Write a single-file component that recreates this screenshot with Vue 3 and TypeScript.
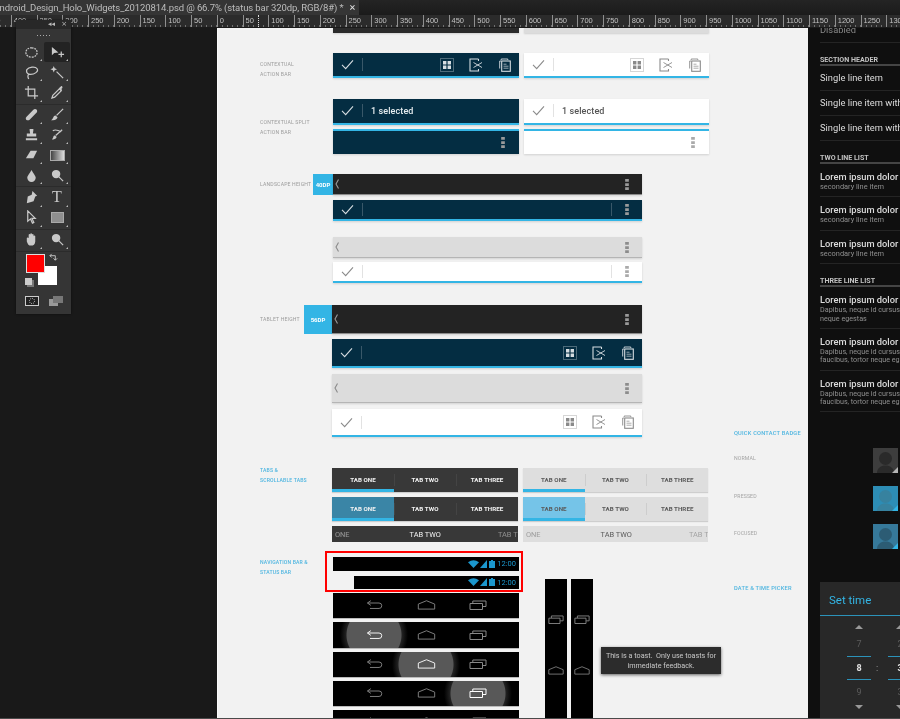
<template>
  <svg class="sprite">
    <symbol id="check" viewBox="0 0 14 12"><path d="M1 6.5 5 10.5 13 1.5" fill="none" stroke="currentColor" stroke-width="1.2" /></symbol>
    <symbol id="grid" viewBox="0 0 14 14">
      <rect x=".5" y=".5" width="13" height="13" fill="none" stroke="currentColor" stroke-width=".7" stroke-dasharray="1 1" />
      <path d="M3 3h3.4v3.4H3zM7.6 3H11v3.4H7.6zM3 7.6h3.4V11H3zM7.6 7.6H11V11H7.6z" fill="currentColor" />
    </symbol>
    <symbol id="cut" viewBox="0 0 14 14">
      <path d="M9.5 1H1v12h8.5V11M9.5 1v2" fill="none" stroke="currentColor" stroke-width="1.1" />
      <path d="M4.5 4.5 13 9.5M4.5 9.5 13 4.5" fill="none" stroke="currentColor" stroke-width=".9" />
    </symbol>
    <symbol id="copy" viewBox="0 0 12 14">
      <path d="M.7 10.5V3h1.3M2.2 2V1h6.6v1" fill="none" stroke="currentColor" stroke-width=".9" />
      <rect x="2.7" y="3" width="8.6" height="10.3" fill="none" stroke="currentColor" stroke-width="1.1" />
      <path d="M4.5 6.2h3M4.5 8.2h5M4.5 10.2h5" stroke="currentColor" stroke-width=".7" />
    </symbol>
    <symbol id="more" viewBox="0 0 4 12"><path d="M0 0h4v3H0zM0 4.5h4v3H0zM0 9h4v3H0z" fill="currentColor" /></symbol>
    <symbol id="caret" viewBox="0 0 4 10"><path d="M3.5 .5 1 5l2.5 4.500" fill="none" stroke="currentColor" stroke-width="1.1" /></symbol>
    <symbol id="back" viewBox="0 0 18 11">
      <path d="M5 .7 1.200 3.300 5 5.900M1.500 3.300H14q3 0 3 3t-3 3H4" fill="none" stroke="currentColor" stroke-width="1" />
    </symbol>
    <symbol id="home" viewBox="0 0 20 11"><path d="M1 10V4.500L10 .8l9 3.700V10z" fill="none" stroke="currentColor" stroke-width="1" /></symbol>
    <symbol id="recent" viewBox="0 0 18 10">
      <path d="M1 3.500h12.500v6H1zM3.800 3.300V1H17v5.500h-3.300" fill="none" stroke="currentColor" stroke-width="1" />
    </symbol>
    <symbol id="wifi" viewBox="0 0 11 8"><path d="M5.500 8 0 2.200Q5.500-1.800 11 2.200z" fill="currentColor" /></symbol>
    <symbol id="signal" viewBox="0 0 7 8"><path d="M7 0v8H0z" fill="currentColor" /></symbol>
    <symbol id="battery" viewBox="0 0 6 8"><path d="M2 0h2v1h2v7H0V1h2z" fill="currentColor" /></symbol>
    <symbol id="person" viewBox="0 0 25 25">
      <circle cx="12.500" cy="10.500" r="6.500" fill="currentColor" />
      <path d="M4 25c0-5 4-7.500 8.500-7.500S21 20 21 25z" fill="currentColor" />
    </symbol>
  </svg>

  <div class="ps">
    <div class="tabbar">
      <div class="tab">
        <span class="tab-name">Android_Design_Holo_Widgets_20120814.psd @ 66.7% (status bar 320dp, RGB/8#) *</span>
        <span class="tab-x">×</span>
      </div>
    </div>
    <div class="ruler">
      <span v-for="n in rulerMarks" :key="n" class="mark">{{ Math.abs(n) }}</span>
      <i class="cursor"></i>
    </div>

    <div class="work">
      <div class="paste"></div>

      <div class="doc">
        <div class="main">
          <div class="sec s0">
            <div class="lab"></div>
            <div class="pair">
              <div class="bar navy cut-top"></div>
              <div class="bar grey cut-top"></div>
            </div>
          </div>

          <div class="sec s1">
            <div class="lab"><span class="note p7">CONTEXTUAL<br />ACTION BAR</span></div>
            <div class="pair">
              <div v-for="c in ['navy', 'white']" :key="c" class="bar h25 uline" :class="c">
                <svg class="chk"><use href="#check" /></svg><i class="dv"></i>
                <span class="fill"></span>
                <svg class="act"><use href="#grid" /></svg>
                <svg class="act"><use href="#cut" /></svg>
                <svg class="act"><use href="#copy" /></svg>
              </div>
            </div>
          </div>

          <div class="sec s2">
            <div class="lab"><span class="note p19">CONTEXTUAL SPLIT<br />ACTION BAR</span></div>
            <div class="pair">
              <div v-for="c in ['navy', 'white']" :key="c" class="split">
                <div class="bar h26 uline pb1" :class="c">
                  <svg class="chk"><use href="#check" /></svg><i class="dv"></i>
                  <span class="sel">1 selected</span>
                </div>
                <div class="bar h25 oline" :class="c">
                  <span class="fill"></span>
                  <svg class="more m1"><use href="#more" /></svg>
                </div>
              </div>
            </div>
          </div>

          <div class="sec s3">
            <div class="lab">
              <span class="note p6">LANDSCAPE HEIGHT</span>
              <b class="tag t40">40DP</b>
            </div>
            <div class="stack w309">
              <div class="bar h21 char">
                <svg class="caret"><use href="#caret" /></svg><span class="fill"></span>
                <svg class="more"><use href="#more" /></svg>
              </div>
              <div class="bar h21 navy uline g5">
                <svg class="chk"><use href="#check" /></svg><i class="dv"></i><span class="fill"></span>
                <i class="dv"></i><svg class="more"><use href="#more" /></svg>
              </div>
              <div class="bar h21 grey g16">
                <svg class="caret"><use href="#caret" /></svg><span class="fill"></span>
                <svg class="more"><use href="#more" /></svg>
              </div>
              <div class="bar h21 white uline g4">
                <svg class="chk"><use href="#check" /></svg><i class="dv"></i><span class="fill"></span>
                <i class="dv"></i><svg class="more"><use href="#more" /></svg>
              </div>
            </div>
          </div>

          <div class="sec s4">
            <div class="lab">
              <span class="note p10">TABLET HEIGHT</span>
              <b class="tag t56">56DP</b>
            </div>
            <div class="stack w310">
              <div class="bar h29 char">
                <svg class="caret"><use href="#caret" /></svg><span class="fill"></span>
                <svg class="more"><use href="#more" /></svg>
              </div>
              <div class="bar h29 navy uline g5">
                <svg class="chk"><use href="#check" /></svg><i class="dv"></i><span class="fill"></span>
                <svg class="act"><use href="#grid" /></svg>
                <svg class="act"><use href="#cut" /></svg>
                <svg class="act"><use href="#copy" /></svg>
              </div>
              <div class="bar h29 grey g6">
                <svg class="caret"><use href="#caret" /></svg><span class="fill"></span>
                <svg class="more"><use href="#more" /></svg>
              </div>
              <div class="bar h28 white uline g6">
                <svg class="chk"><use href="#check" /></svg><i class="dv"></i><span class="fill"></span>
                <svg class="act"><use href="#grid" /></svg>
                <svg class="act"><use href="#cut" /></svg>
                <svg class="act"><use href="#copy" /></svg>
              </div>
            </div>
          </div>

          <div class="sec s5">
            <div class="lab"><span class="note blue up3">TABS &amp;<br />SCROLLABLE TABS</span></div>
            <div class="tabs-grid">
              <template v-for="c in ['dk', 'lt']" :key="c">
                <div class="tabs" :class="c">
                  <span class="on">TAB ONE</span><span>TAB TWO</span><span>TAB THREE</span>
                </div>
              </template>
              <template v-for="c in ['dk', 'lt']" :key="c">
                <div class="tabs press" :class="c">
                  <span class="on">TAB ONE</span><span>TAB TWO</span><span>TAB THREE</span>
                </div>
              </template>
              <template v-for="c in ['dk', 'lt']" :key="c">
                <div class="scroll" :class="c">
                  <span class="first">ONE</span><span class="mid">TAB TWO</span><span class="last">TAB THREE</span>
                </div>
              </template>
            </div>
          </div>

          <div class="sec s6">
            <div class="lab"><span class="note blue p1">NAVIGATION BAR &amp;<br />STATUS BAR</span></div>
            <div class="navs">
              <div class="red"></div>
              <div v-for="(w, i) in [186, 165]" :key="i" class="status" :style="{ width: w + 'px' }">
                <svg class="wifi"><use href="#wifi" /></svg>
                <svg class="sig"><use href="#signal" /></svg>
                <svg class="bat"><use href="#battery" /></svg>
                <span>12:00</span>
              </div>
              <div v-for="(n, i) in navRows" :key="i" class="nav" :class="n">
                <svg class="nb"><use href="#back" /></svg>
                <svg class="nh"><use href="#home" /></svg>
                <svg class="nr"><use href="#recent" /></svg>
              </div>
            </div>
            <div class="vnavs">
              <div v-for="i in 2" :key="i" class="vnav">
                <svg class="vi"><use href="#recent" /></svg>
                <svg class="vi"><use href="#home" /></svg>
              </div>
              <div class="toast">This is a toast.&nbsp; Only use toasts for immediate feedback.</div>
            </div>
          </div>
        </div>

        <div class="notes">
          <div class="nh1">QUICK CONTACT BADGE</div>
          <div class="nn">NORMAL</div>
          <div class="nn">PRESSED</div>
          <div class="nn">FOCUSED</div>
          <div class="nh2">DATE &amp; TIME PICKER</div>
        </div>
      </div>

      <div class="side">
        <div class="li single clip">Disabled</div>
        <div class="hd">SECTION HEADER</div>
        <div class="li single">Single line item</div>
        <div class="li single">Single line item with</div>
        <div class="li single">Single line item with</div>
        <div class="hd">TWO LINE LIST</div>
        <div v-for="i in 3" :key="i" class="li two">
          <div class="pri">Lorem ipsum dolor</div>
          <div class="sub">secondary line item</div>
        </div>
        <div class="hd">THREE LINE LIST</div>
        <div v-for="(t, i) in threeLines" :key="i" class="li three">
          <div class="pri">Lorem ipsum dolor</div>
          <div class="sub">Dapibus, neque id cursus</div>
          <div class="sub">{{ t }}</div>
        </div>
        <div class="badges">
          <div v-for="b in ['b-n', 'b-p', 'b-f']" :key="b" class="badge" :class="b">
            <svg><use href="#person" /></svg>
          </div>
        </div>
        <div class="dialog">
          <div class="dlg-title">Set time</div>
          <div class="picker">
            <div v-for="(col, i) in pickerCols" :key="i" class="pcol" :class="{ second: i === 1 }">
              <i class="up"></i>
              <span class="dim">{{ col[0] }}</span>
              <b class="cur">{{ col[1] }}</b>
              <span class="dim">{{ col[2] }}</span>
              <i class="down"></i>
            </div>
            <span class="colon">:</span>
          </div>
        </div>
      </div>
    </div>

    <div class="tools">
      <div class="tools-head"><span>◂◂</span><span>×</span></div>
      <div class="grip"></div>
      <div v-for="(group, g) in toolGroups" :key="g" class="tgroup">
        <div v-for="(t, i) in group" :key="i" class="tool" :class="{ picked: t.picked }">
          <svg v-if="t.s || t.f" viewBox="0 0 16 16">
            <path v-if="t.f" :d="t.f" class="tf" />
            <path v-if="t.s" :d="t.s" class="ts" :class="{ dash: t.dash }" />
          </svg>
          <span v-else-if="t.text" class="tool-t">{{ t.text }}</span>
          <span v-else :class="t.box"></span>
        </div>
      </div>
      <div class="swatches">
        <i class="bgc"></i>
        <i class="fgc"></i>
        <i class="dflt"></i>
        <svg class="swap" viewBox="0 0 10 10"><path d="M1 3h6v5M1 3l2-2M1 3l2 2M7 8 5 6M7 8l2-2" fill="none" stroke="#ccc" stroke-width="1" /></svg>
      </div>
      <div class="modes">
        <svg viewBox="0 0 14 10"><rect x=".5" y=".5" width="13" height="9" fill="#222" stroke="#ccc" /><circle cx="7" cy="5" r="2.600" fill="none" stroke="#ccc" stroke-dasharray="1 1" /></svg>
        <svg viewBox="0 0 14 10"><rect x="0" y="3" width="9" height="7" fill="#999" /><rect x="4" y="0" width="10" height="7" fill="#777" /></svg>
      </div>
    </div>
    <div class="foot"></div>
  </div>
</template>

<script setup lang="ts">
type Tool = { s?: string; f?: string; dash?: boolean; picked?: boolean; text?: string; box?: string }

// ruler runs every 50 units, 25.75px apart
const rulerMarks: number[] = []
for (let n = -450; n <= 1350; n += 50) rulerMarks.push(n)

const navRows = ['', 'p1', 'p2', 'p3', '']
const threeLines = ['neque egestas', 'faucibus, tortor neque eg', 'faucibus, tortor neque eg']
const pickerCols = [['7', '8', '9'], ['2', '3', '3']]

const toolGroups: Tool[][] = [
  [
    { s: 'M8 3c3.600 0 6 2.200 6 5s-2.400 5-6 5-6-2.200-6-5 2.400-5 6-5z', dash: true },
    { f: 'M2 2v9l2.500-2.500L9 8z', s: 'M12 7v6M9 10h6', picked: true },
    { s: 'M3 5c2-3 9-4 11-1s-3 6-7 6c-3 0-5-2-4-5zM5 10c-1 1-1 3 0 5' },
    { f: 'M4 1l1 2.500 2.500 1-2.500 1-1 2.500-1-2.500L.5 4.500 3 3.500z', s: 'M7 7l7 7' },
    { s: 'M4.500 1v10.500H15M1 4.500h10.500V15' },
    { f: 'M9.500 3.500l2-2c1-1 2.500.5 1.500 2l-1 .7 1 1-1 1-3-3z', s: 'M2 14l1-3 7-7 2 2-7 7z' }
  ],
  [
    { f: 'M3 10l7-7c1.500-1.500 4-.5 4 1 0 1 0 1.500-1 2.500l-7 7c-1.500 1.500-4 .5-4-1-.3-1 0-1.500 1-2.500z' },
    { f: 'M6 9c-3 0-2 4-5 5 4 1 7-1 7-3z', s: 'M14 2 7 9' },
    { f: 'M6 2h4v1.500L9.500 7H13v3H3V7h3.500L6 3.500zM2 12h12v2H2z' },
    { f: 'M5 9c-2 0-1 3-3 4 3 1 5-1 5-2.500z', s: 'M13 3 6 9M3 4c3-2 7 0 9 1' },
    { f: 'M7 3h7l-4 8H2z' },
    { box: 'grad' },
    { f: 'M8 2c2 4 4.500 6 4.500 8.500a4.500 4.500 0 01-9 0C3.500 8 6 6 8 2z' },
    { f: 'M6.500 2a4.500 4.500 0 110 9 4.500 4.500 0 010-9z', s: 'M9 9l5 5' }
  ],
  [
    { f: 'M9 1l5 5-2 .8-1.800 5.200L3 14l1-7 4.200-2z' },
    { text: 'T' },
    { s: 'M4 1v11l3-2.500 2 4.500 1.500-.7-2-4.300H12z' },
    { box: 'shape' }
  ],
  [
    { f: 'M3 6.500c0-1 1.500-1 2 0V3c0-1 1.700-1 1.700 0V2c0-1 1.800-1 1.800 0v1c0-1 1.700-1 1.700 0v1.500c0-1 1.800-1 1.800 0V10c0 3-2 4.500-4.500 4.500S4 13 3 10z' },
    { f: 'M6.500 2a4.500 4.500 0 110 9 4.500 4.500 0 010-9z', s: 'M9 9l5 5' }
  ]
]
</script>

<style>
html, body {
  margin: 0;
  height: 719px;
  overflow: hidden;
  background: #191919;
}
</style>

<style scoped>
.sprite { display: none; }
.ps {
  position: relative;
  width: 900px;
  height: 719px;
  overflow: hidden;
  font-family: Roboto, "Liberation Sans", sans-serif;
  background: #191919;
  filter: blur(.3px);
}

/* title strip + ruler */
.tabbar {
  height: 15px;
  background: linear-gradient(#242424, #1b1b1b);
  overflow: hidden;
}
.tab {
  width: 359px;
  height: 15px;
  background: #353535;
  display: flex;
  align-items: center;
  white-space: nowrap;
  overflow: hidden;
  font: 9.5px Roboto, sans-serif;
  letter-spacing: -.1px;
  color: #bcbcbc;
}
.tab-name { margin-left: -6.500px; flex: none; }
.tab-x { margin-left: 6px; color: #ddd; font-size: 11px; }
.ruler {
  position: relative;
  height: 13px;
  background: #2b2b2b;
  display: flex;
  overflow: hidden;
  margin-left: -15px;
  border-bottom: 1px solid #1a1a1a;
  box-sizing: border-box;
}
.mark {
  flex: none;
  width: 25.75px;
  box-sizing: border-box;
  border-left: 1px solid #8f8f8f;
  padding-left: 2px;
  font: 7.5px/12px "Liberation Sans", sans-serif;
  color: #c2c2c2;
  background: repeating-linear-gradient(90deg, transparent 0 4px, #6f6f6f 4px 5px) left bottom / 100% 2px no-repeat;
}
.cursor {
  position: absolute;
  left: 273px;
  top: 0;
  bottom: 0;
  border-left: 1px dotted #ddd;
}

/* workspace */
.work { display: flex; height: 691px; }
.paste { width: 217px; flex: none; background: #191919; }
.doc {
  width: 591px;
  flex: none;
  display: flex;
  background: #f2f2f2;
  overflow: hidden;
  border-left: 1px solid #fafafa;
  box-sizing: border-box;
}
.main { width: 516px; flex: none; }
.sec { display: grid; grid-template-columns: 115px 1fr; }
.lab { display: flex; align-items: flex-start; min-width: 0; }
.note {
  display: block;
  padding-left: 42px;
  font-size: 5.1px;
  line-height: 9.5px;
  letter-spacing: .2px;
  color: #9c9c9c;
  white-space: nowrap;
}
.note.blue { color: #4db5e0; font-weight: 500; letter-spacing: .15px; }
.p1 { padding-top: 1px; }
.p6 { padding-top: 6px; }
.p7 { padding-top: 7px; }
.p10 { padding-top: 10px; }
.p19 { padding-top: 19px; }
.up3 { margin-top: -2px; }
.tag {
  margin-left: auto;
  flex: none;
  background: #33b5e5;
  color: #fff;
  font-size: 6px;
  font-weight: 700;
  display: flex;
  align-items: center;
  justify-content: center;
}
.t40 { width: 20px; height: 21px; }
.t56 { width: 28px; height: 29px; margin-right: 1px; }

.s1, .s2, .s3 { margin-top: 20px; }
.s4 { margin-top: 22px; }
.s5 { margin-top: 31px; }
.s6 { margin-top: 15px; grid-template-columns: 115px 186px 1fr; }

.pair { display: grid; grid-template-columns: 186px 185px; gap: 5px; }
.split { display: flex; flex-direction: column; gap: 4px; }
.stack { display: flex; flex-direction: column; }
.w309 { width: 309px; }
.w310 { width: 310px; margin-left: -1px; }
.g4 { margin-top: 4px; }
.g5 { margin-top: 5px; }
.g6 { margin-top: 6px; }
.g16 { margin-top: 16px; }

.bar {
  display: flex;
  align-items: center;
  box-sizing: border-box;
  box-shadow: 0 1px 2px rgba(0, 0, 0, .14);
}
.cut-top { height: 5px; }
.h21 { height: 21px; }
.h25 { height: 25px; }
.h26 { height: 26px; }
.h28 { height: 28px; }
.h29 { height: 29px; }
.pb1 { padding-bottom: 1px; }
.navy { background: #042d42; color: #d6dde1; }
.white { background: #fff; color: #8a8a8a; }
.char { background: #232323; color: #9a9a9a; border-bottom: 1px solid #8c8c8c; }
.grey { background: #dcdcdc; color: #8a8a8a; border-bottom: 1px solid #b5b5b5; }
.cut-top.navy { background: #2b2b2b; }
.cut-top.grey { border: 0; }
.uline { border-bottom: 2px solid #33b5e5; }
.oline { border-top: 2px solid #33b5e5; }
.fill { flex: 1; }
.chk { width: 13px; height: 11px; margin: 0 8px 0 8px; flex: none; }
.dv { width: 1px; height: 13px; background: currentColor; opacity: .25; flex: none; }
.act { width: 14px; height: 14px; flex: none; margin: 0 7.5px; }
.act:last-child { margin-right: 7px; }
.sel { margin-left: 8px; font-size: 9px; font-weight: 500; color: #e6ecef; letter-spacing: .1px; }
.white .sel { color: #555; }
.more { width: 4px; height: 11px; flex: none; margin: 0 13px 0 13px; color: #8c8c8c; }
.more.m1 { margin-right: 14px; }
.navy .more, .char .more { color: #9a9a9a; }
.white .more { color: #aaa; }
.caret { width: 4px; height: 10px; margin-left: 2px; flex: none; }

/* tabs */
.tabs-grid {
  display: grid;
  grid-template-columns: 186px 185px;
  grid-template-rows: 24px 24px 16px;
  gap: 5px;
  margin-left: -1px;
}
.tabs {
  display: grid;
  grid-template-columns: 1fr 1fr 1fr;
  font-size: 6.2px;
  font-weight: 700;
  letter-spacing: .05px;
  box-shadow: 0 1px 1px rgba(0, 0, 0, .15);
}
.tabs span { display: flex; align-items: center; justify-content: center; }
.tabs span + span { position: relative; }
.tabs span + span::before {
  content: "";
  position: absolute;
  left: 0;
  top: 6px;
  height: 12px;
  width: 1px;
  background: rgba(128, 128, 128, .18);
}
.tabs.dk, .scroll.dk { background: #383838; color: #f2f2f2; }
.tabs.lt, .scroll.lt { background: #dedede; color: #5a5a5a; }
.tabs .on { border-bottom: 3px solid #33b5e5; padding-top: 2px; }
.tabs.dk.press .on { background: #3a85a6; }
.tabs.lt.press .on { background: #75c4e8; }
.scroll {
  display: flex;
  align-items: center;
  overflow: hidden;
  white-space: nowrap;
  font-size: 7.4px;
}
.scroll span { flex: none; }
.scroll .first { margin-left: 3px; opacity: .5; }
.scroll .mid { margin-left: 60px; }
.scroll .last { margin-left: 57px; opacity: .45; }

/* nav + status */
.navs { position: relative; display: flex; flex-direction: column; align-items: flex-end; margin-left: -1px; }
.red {
  position: absolute;
  left: -7px;
  top: -6px;
  width: 198px;
  height: 41px;
  box-sizing: border-box;
  border: 2px solid #f00;
}
.status {
  height: 13.5px;
  margin-bottom: 5px;
  background: #000;
  color: #1b97cd;
  display: flex;
  align-items: center;
  justify-content: flex-end;
  padding-right: 3px;
  box-sizing: border-box;
  flex: none;
  font-size: 7.5px;
}
.status + .status { margin-bottom: 4px; }
.wifi { width: 11px; height: 8px; }
.sig { width: 7px; height: 8px; margin-left: 1px; }
.bat { width: 6px; height: 8px; margin: 0 2px 0 2px; }
.nav {
  width: 186px;
  height: 24.500px;
  margin-bottom: 4.500px;
  flex: none;
  display: flex;
  justify-content: center;
  align-items: center;
  background-color: #000;
  color: #888;
  box-shadow: 0 1px 0 #bbb;
}
.nb { width: 17px; height: 10px; margin: 0 17.500px; flex: none; }
.nh { width: 19px; height: 10px; margin: 0 16.500px; flex: none; }
.nr { width: 18px; height: 10px; margin: 0 17px; flex: none; }
.vi { width: 16px; height: 9px; flex: none; }
.nav.p1 { background-image: radial-gradient(circle 34px at 41px 50%, #585858 27px, #222 28px, #000); }
.nav.p2 { background-image: radial-gradient(circle 34px at 93px 50%, #585858 27px, #222 28px, #000); }
.nav.p3 { background-image: radial-gradient(circle 34px at 145px 50%, #585858 27px, #222 28px, #000); }
.nav.p1 .nb, .nav.p2 .nh, .nav.p3 .nr { color: #fff; }

.vnavs { display: flex; align-items: flex-start; padding-left: 26px; }
.vnav {
  width: 21.500px;
  height: 200px;
  margin: 22px 4.500px 0 0;
  background: #000;
  color: #8a8a8a;
  display: flex;
  flex-direction: column;
  align-items: center;
  gap: 42px;
  padding-top: 36px;
  box-sizing: border-box;
  flex: none;
}
.toast {
  flex: none;
  width: 120px;
  height: 27px;
  margin: 90px 0 0 4px;
  background: #2c2c2c;
  color: #c8c8c8;
  font-size: 7.2px;
  line-height: 9.5px;
  padding-top: 4px;
  box-sizing: border-box;
  text-align: center;
  box-shadow: 0 1px 3px rgba(0, 0, 0, .6);
}

/* right hand labels on the page */
.notes { flex: 1; white-space: nowrap; }
.nh1, .nh2 { color: #4db5e0; font-size: 5.700px; font-weight: 500; letter-spacing: .2px; }
.nh1 { margin-top: 402px; }
.nh2 { margin-top: 18.500px; }
.nn { font-size: 5.200px; color: #a5a5a5; letter-spacing: .1px; height: 37.500px; line-height: 8px; }
.nh1 + .nn { margin-top: 18px; }

/* dark list panel */
.side {
  flex: 1;
  min-width: 0;
  background: #0f0f0f;
  padding-left: 12px;
  overflow: hidden;
  white-space: nowrap;
  color: #dcdcdc;
}
.li { box-sizing: border-box; border-bottom: 1px solid #242424; }
.single { height: 25px; line-height: 24px; font-size: 9.300px; }
.single.clip { height: 15px; line-height: 4px; color: #888; }
.hd {
  height: 23px;
  box-sizing: border-box;
  padding-top: 12px;
  border-bottom: 2px solid #454545;
  font-size: 7.100px;
  line-height: 9px;
  font-weight: 700;
  color: #c2c2c2;
}
.two { height: 33.400px; padding-top: 6px; }
.three { height: 41.700px; padding-top: 6px; }
.pri { font-size: 9.300px; line-height: 13px; font-weight: 500; }
.sub { font-size: 7.400px; line-height: 8.500px; color: #8f8f8f; }
.three .sub { font-size: 7.200px; }
.badges {
  display: flex;
  flex-direction: column;
  gap: 13px;
  margin: 36px 0 0 53px;
}
.badge { position: relative; width: 25px; height: 25px; flex: none; overflow: hidden; }
.badge svg { width: 25px; height: 25px; display: block; }
.badge::after {
  content: "";
  position: absolute;
  right: 0;
  bottom: 0;
  border-style: solid;
  border-width: 0 0 6px 6px;
  border-color: transparent transparent #b5b5b5 transparent;
}
.b-n { background: #3d3d3d; color: #2a2a2a; }
.b-p { background: #2d8db5; color: #37829f; }
.b-f { background: #36799a; color: #2c5c74; }
.b-p::after, .b-f::after { border-bottom-color: #33b5e5; }
.dialog { margin-top: 33px; width: 120px; height: 140px; background: #282828; }
.dlg-title {
  height: 34px;
  box-sizing: border-box;
  padding: 11px 0 0 9px;
  font-size: 11.500px;
  line-height: 14px;
  color: #33b5e5;
  border-bottom: 1px solid #2c93ba;
}
.picker { position: relative; display: flex; padding: 9px 0 0 27px; }
.pcol {
  width: 24px;
  display: flex;
  flex-direction: column;
  align-items: center;
  flex: none;
  font-size: 9px;
  color: #5c5c5c;
}
.pcol.second { margin-left: 17px; }
.up, .down { width: 0; height: 0; border-left: 4px solid transparent; border-right: 4px solid transparent; }
.up { border-bottom: 4px solid #999; margin-bottom: 8.500px; }
.down { border-top: 4px solid #999; margin-top: 6.500px; }
.dim { height: 13px; line-height: 13px; }
.cur {
  width: 100%;
  height: 24.500px;
  line-height: 22.500px;
  text-align: center;
  color: #e0e0e0;
  border-top: 1px solid #2c93ba;
  border-bottom: 1px solid #2c93ba;
  margin: 5px 0 5.500px;
  box-sizing: border-box;
}
.colon { position: absolute; left: 56px; top: 46px; font-size: 9px; line-height: 12px; color: #aaa; }

/* floating tool panel */
.tools {
  position: absolute;
  left: 16px;
  top: 20px;
  width: 55px;
  height: 294px;
  background: #353535;
  box-shadow: 0 0 2px rgba(0, 0, 0, .6);
}
.tools-head {
  height: 9px;
  background: #282828;
  display: flex;
  justify-content: flex-end;
  gap: 6px;
  padding-right: 4px;
  font: 7px/9px "DejaVu Sans", sans-serif;
  color: #bbb;
}
.grip {
  height: 13px;
  background: radial-gradient(circle, #aaa 0 .6px, transparent 1px) center / 3px 3px repeat-x;
  margin: 0 20px;
}
.tgroup {
  display: grid;
  grid-template-columns: 26px 26px;
  padding: 0 0 1px 2px;
  border-bottom: 1px solid #2b2b2b;
  grid-auto-rows: 20.200px;
}
.tgroup:last-of-type { border-bottom: 0; }
.tool { position: relative; display: flex; align-items: center; justify-content: center; }
.tool svg { width: 15px; height: 15px; }
.tool::after {
  content: "";
  position: absolute;
  right: 2px;
  bottom: 1px;
  border-style: solid;
  border-width: 0 0 2px 2px;
  border-color: transparent transparent #bbb transparent;
}
.picked { background: #232323; border-radius: 2px; }
.ts { fill: none; stroke: #c9c9c9; stroke-width: 1.300; }
.ts.dash { stroke-dasharray: 2 1; }
.tf { fill: #c9c9c9; }
.tool-t { font: 16px/16px "Liberation Serif", serif; color: #c9c9c9; }
.grad { width: 13px; height: 9px; background: linear-gradient(90deg, #444, #ddd); border: 1px solid #aaa; }
.shape { width: 11px; height: 9px; background: #8f8f8f; border: 1px solid #aaa; }
.swatches { position: relative; height: 42px; }
.fgc, .bgc, .dflt { position: absolute; display: block; box-sizing: border-box; }
.fgc { left: 10px; top: 2px; width: 19px; height: 19px; background: #f00; border: 1px solid #ddd; }
.bgc { left: 22px; top: 14px; width: 19px; height: 19px; background: #fff; }
.dflt { left: 9px; top: 26px; width: 7px; height: 7px; background: #ccc; box-shadow: 2px 2px 0 #777; }
.swap { position: absolute; left: 33px; top: 1px; width: 9px; height: 9px; }
.modes { display: flex; justify-content: space-around; padding: 2px 3px 0 4px; }
.modes svg { width: 14px; height: 10px; }

.foot { position: absolute; left: 0; right: 0; bottom: 0; height: 1px; background: #4a4a4a; }
</style>
